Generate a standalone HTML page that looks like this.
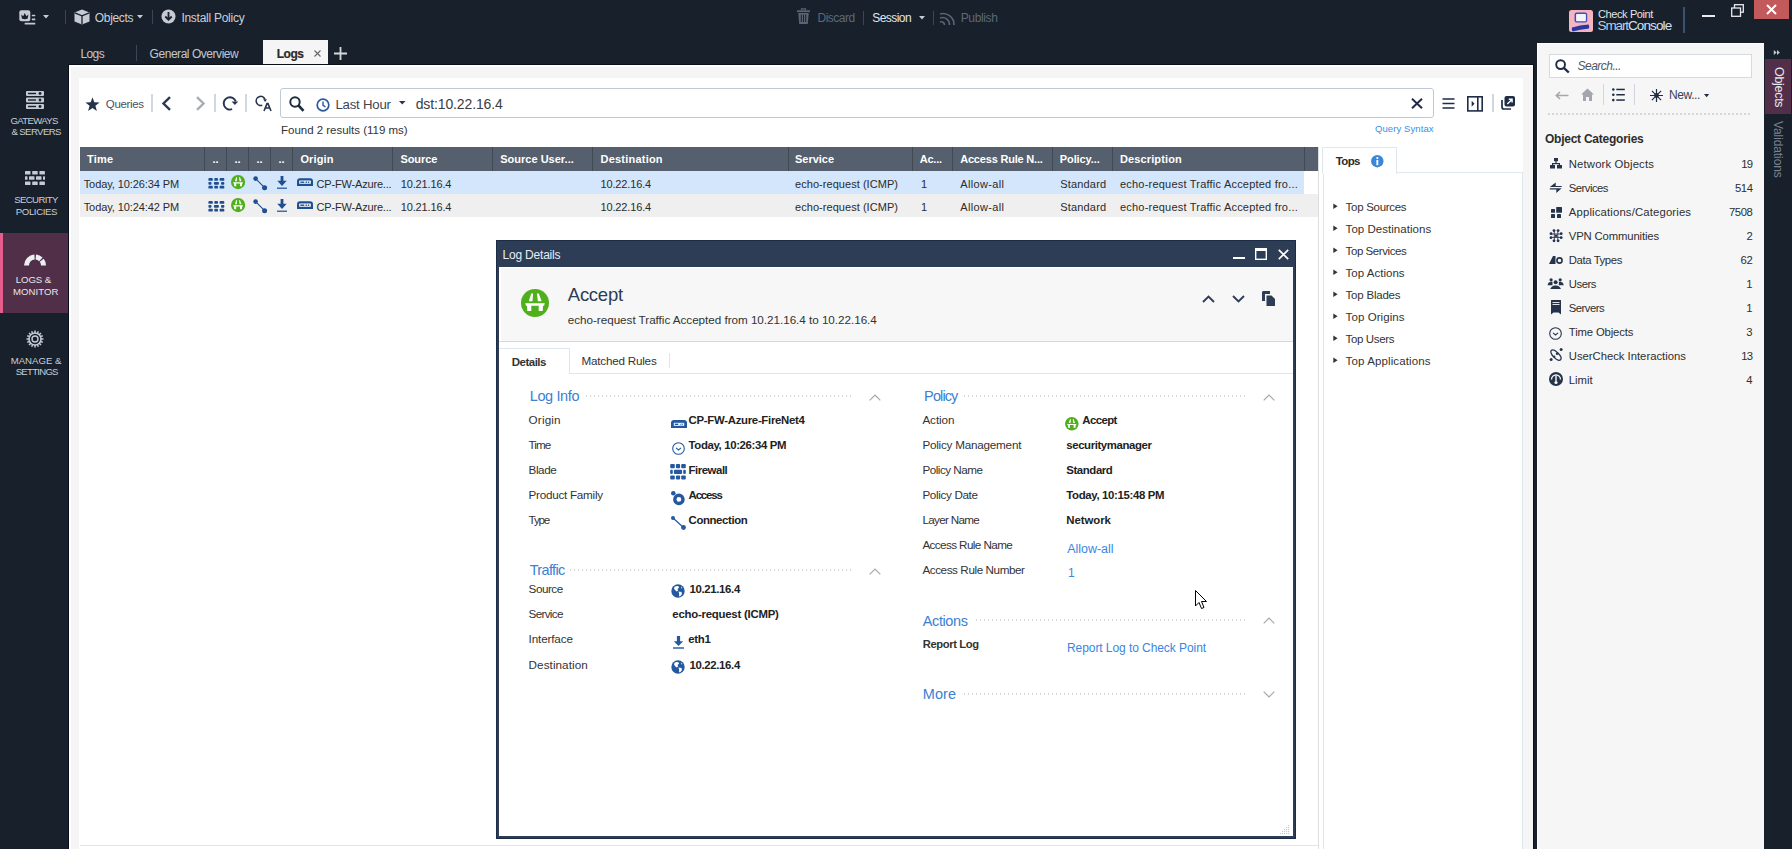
<!DOCTYPE html>
<html><head><meta charset="utf-8"><style>
*{box-sizing:border-box;margin:0;padding:0}
html,body{width:1792px;height:849px;overflow:hidden;background:#17202b;font-family:"Liberation Sans",sans-serif;color:#2b2b2b}
.a{position:absolute}
.t{position:absolute;white-space:nowrap;line-height:1}
svg{position:absolute;overflow:visible}
</style></head><body>
<svg style="left:19px;top:10px" width="18" height="15" viewBox="0 0 18 15">
 <rect x="0.3" y="0.3" width="11" height="10.9" rx="2" fill="#c5cad3"/>
 <path d="M2.2 4.4 L4.2 6.2 L5.8 3.1 L7.4 6.2 L9.4 4.4 L8.7 8.6 Q5.8 9.7 2.9 8.6Z" fill="#17202b"/>
 <rect x="12.8" y="4.7" width="3.5" height="1.6" rx="0.5" fill="#c5cad3"/><rect x="12.8" y="8.6" width="3.5" height="1.6" rx="0.5" fill="#c5cad3"/>
 <rect x="5.6" y="12.8" width="10.7" height="1.6" rx="0.5" fill="#c5cad3"/>
</svg>
<svg style="left:43px;top:14.5px" width="6" height="4"><path d="M0 0 L6 0 L3 3.5Z" fill="#c5cad3"/></svg>
<div class="a" style="left:65px;top:10px;width:1px;height:14px;background:#3c4655"></div>
<svg style="left:74px;top:9px" width="16" height="16" viewBox="0 0 16 16">
 <path d="M8 0.5 L15.5 3.5 L15.5 12.5 L8 15.5 L0.5 12.5 L0.5 3.5Z" fill="#c5cad3"/>
 <path d="M0.8 3.8 L8 6.8 L15.2 3.8 M8 6.8 L8 15.3" stroke="#17202b" stroke-width="1.3" fill="none"/>
</svg>
<svg style="left:137px;top:15px" width="6" height="4"><path d="M0 0 L6 0 L3 3.5Z" fill="#c5cad3"/></svg>
<div class="a" style="left:152px;top:10px;width:1px;height:14px;background:#3c4655"></div>
<svg style="left:161px;top:9px" width="15" height="15" viewBox="0 0 15 15">
 <circle cx="7.5" cy="7.5" r="7" fill="#c5cad3"/>
 <path d="M7.5 3 L7.5 10.5 M4.3 7.5 L7.5 10.8 L10.7 7.5" stroke="#17202b" stroke-width="1.8" fill="none"/>
</svg>
<div class="t" style="left:94.80px;top:12.00px;font-size:12px;color:#c9d0da;letter-spacing:-0.327px;">Objects</div>
<div class="t" style="left:181.40px;top:12.00px;font-size:12px;color:#c9d0da;letter-spacing:-0.265px;">Install Policy</div>
<svg style="left:797px;top:8px" width="13" height="17" viewBox="0 0 13 17">
 <path d="M4.5 2 L4.5 0.8 L8.5 0.8 L8.5 2" stroke="#5b6472" stroke-width="1.2" fill="none"/>
 <rect x="0" y="2.3" width="13" height="1.8" fill="#5b6472"/>
 <path d="M1.3 5 L2.2 16 L10.8 16 L11.7 5Z" fill="#5b6472"/>
 <path d="M4.3 6.5 L4.3 14 M6.5 6.5 L6.5 14 M8.7 6.5 L8.7 14" stroke="#17202b" stroke-width="1"/>
</svg>
<div class="a" style="left:863px;top:11px;width:1px;height:14px;background:#3c4655"></div>
<svg style="left:919px;top:16px" width="6" height="4"><path d="M0 0 L6 0 L3 3.5Z" fill="#c5cad3"/></svg>
<div class="a" style="left:933px;top:11px;width:1px;height:14px;background:#3c4655"></div>
<svg style="left:939px;top:9px" width="16" height="17" viewBox="0 0 16 17">
 <path d="M1 5 A11 11 0 0 1 15 16 M1 9 A7 7 0 0 1 10.5 16 M1 13 A3.2 3.2 0 0 1 5.5 16" stroke="#5b6472" stroke-width="1.6" fill="none"/>
</svg>
<div class="t" style="left:817.60px;top:12.00px;font-size:12px;color:#5e6876;letter-spacing:-0.527px;">Discard</div>
<div class="t" style="left:872.30px;top:12.00px;font-size:12px;color:#e3e7ec;letter-spacing:-0.572px;">Session</div>
<div class="t" style="left:960.70px;top:12.00px;font-size:12px;color:#5e6876;letter-spacing:-0.366px;">Publish</div>
<div class="a" style="left:1569px;top:9.5px;width:23.5px;height:22.5px;background:#f6b4c3;border-radius:2.5px"></div>
<svg style="left:1569px;top:9.5px" width="24" height="23" viewBox="0 0 24 23">
 <rect x="5.6" y="2.6" width="12.6" height="9.8" rx="2" fill="#3f4db5"/>
 <rect x="7.1" y="3.9" width="9.8" height="7.3" rx="0.6" fill="#f4f4fb"/>
 <path d="M3 17.6 Q11 15 19.6 14.6 Q20.6 16.5 20 18.6 Q11 19.5 3.6 21.6 Q2.2 19.5 3 17.6Z" fill="#2637a3"/>
</svg>
<div class="a" style="left:1683px;top:7px;width:2px;height:26px;background:#3b5170"></div>
<div class="a" style="left:1702px;top:15px;width:13px;height:2px;background:#e8eaee"></div>
<svg style="left:1731px;top:4px" width="13" height="13" viewBox="0 0 13 13">
 <rect x="3.5" y="0.7" width="8.8" height="7.5" fill="none" stroke="#e8eaee" stroke-width="1.3"/>
 <rect x="0.7" y="4" width="8.8" height="8.3" fill="#17202b" stroke="#e8eaee" stroke-width="1.3"/>
</svg>
<div class="a" style="left:1754px;top:0;width:35px;height:19px;background:#c2595b"></div>
<svg style="left:1766px;top:4px" width="11" height="11" viewBox="0 0 11 11"><path d="M1 1 L10 10 M10 1 L1 10" stroke="#fff" stroke-width="2"/></svg>
<div class="t" style="left:1598.00px;top:9.00px;font-size:11px;color:#e2e4e8;letter-spacing:-0.392px;">Check Point</div>
<div class="t" style="left:1597.5px;top:18.8px;font-size:13.5px;letter-spacing:-1.1px;color:#b9cde6">Smart<span style="color:#d4e3f5;letter-spacing:-0.9px">Console</span></div>
<div class="a" style="left:136px;top:45px;width:1px;height:16px;background:#3c4655"></div>
<div class="a" style="left:263px;top:40px;width:65px;height:27px;background:#f5f5f5"></div>
<svg style="left:314px;top:50px" width="7" height="7"><path d="M0.5 0.5 L6.5 6.5 M6.5 0.5 L0.5 6.5" stroke="#666" stroke-width="1.1"/></svg>
<svg style="left:334px;top:47px" width="13" height="13"><path d="M6.5 0 L6.5 13 M0 6.5 L13 6.5" stroke="#d5d9de" stroke-width="1.8"/></svg>
<div class="t" style="left:80.40px;top:48.00px;font-size:12px;color:#c3c8d0;letter-spacing:-0.558px;">Logs</div>
<div class="t" style="left:149.60px;top:48.00px;font-size:12px;color:#c3c8d0;letter-spacing:-0.459px;">General Overview</div>
<div class="t" style="left:276.80px;top:48.00px;font-size:12px;color:#2b2b2b;letter-spacing:-0.508px;font-weight:600;-webkit-text-stroke:0.2px #2b2b2b;">Logs</div>
<svg style="left:26px;top:91px" width="18" height="18" viewBox="0 0 18 18">
 <g fill="#c5cad3">
  <rect x="0" y="0" width="18" height="5" rx="1"/><rect x="0" y="6.5" width="18" height="5" rx="1"/><rect x="0" y="13" width="18" height="5" rx="1"/>
 </g>
 <g fill="#17202b">
  <rect x="2" y="1.8" width="8" height="1.4"/><rect x="2" y="8.3" width="8" height="1.4"/><rect x="2" y="14.8" width="8" height="1.4"/>
  <circle cx="14" cy="2.5" r="1.4"/><circle cx="14" cy="9" r="1.4"/><circle cx="14" cy="15.5" r="1.4"/>
 </g>
</svg>
<svg style="left:25px;top:171px" width="20" height="14" viewBox="0 0 20 14">
 <g fill="#c5cad3">
  <rect x="0" y="0" width="5.5" height="3.6" rx="0.6"/><rect x="7.2" y="0" width="5.5" height="3.6" rx="0.6"/><rect x="14.4" y="0" width="5.5" height="3.6" rx="0.6"/>
  <rect x="0" y="5.2" width="2.5" height="3.6" rx="0.6"/><rect x="4" y="5.2" width="5.5" height="3.6" rx="0.6"/><rect x="11" y="5.2" width="5.5" height="3.6" rx="0.6"/><rect x="18" y="5.2" width="2" height="3.6" rx="0.6"/>
  <rect x="0" y="10.4" width="5.5" height="3.6" rx="0.6"/><rect x="7.2" y="10.4" width="5.5" height="3.6" rx="0.6"/><rect x="14.4" y="10.4" width="5.5" height="3.6" rx="0.6"/>
 </g>
</svg>
<div class="a" style="left:0;top:233px;width:69px;height:80px;background:#522f48"></div>
<div class="a" style="left:0;top:233px;width:3px;height:80px;background:#e55d8c"></div>
<svg style="left:24px;top:253px" width="22" height="13" viewBox="0 0 22 13">
 <path d="M2.5 12.5 A8.5 8.5 0 0 1 19.5 12.5" stroke="#eceef2" stroke-width="5" fill="none" stroke-dasharray="12.8 1.3 5.6 1.3 100"/>
</svg>
<svg style="left:26px;top:330px" width="18" height="18" viewBox="0 0 18 18">
 <g stroke="#c5cad3" fill="none">
  <circle cx="9" cy="9" r="6" stroke-width="1.6"/><circle cx="9" cy="9" r="3" stroke-width="1.4"/>
  <path d="M9 0.5 L9 3 M9 15 L9 17.5 M0.5 9 L3 9 M15 9 L17.5 9 M3 3 L4.8 4.8 M13.2 13.2 L15 15 M3 15 L4.8 13.2 M13.2 4.8 L15 3 M5.7 1.2 L6.4 3.1 M11.6 14.9 L12.3 16.8 M1.2 12.3 L3.1 11.6 M14.9 6.4 L16.8 5.7 M12.3 1.2 L11.6 3.1 M6.4 14.9 L5.7 16.8 M1.2 5.7 L3.1 6.4 M14.9 11.6 L16.8 12.3" stroke-width="1.5"/>
 </g>
</svg>
<div class="t" style="left:10.60px;top:116.00px;font-size:9.6px;color:#c9ced6;letter-spacing:-0.687px;">GATEWAYS</div>
<div class="t" style="left:11.40px;top:127.00px;font-size:9.6px;color:#c9ced6;letter-spacing:-0.583px;">&amp; SERVERS</div>
<div class="t" style="left:14.30px;top:195.00px;font-size:9.6px;color:#c9ced6;letter-spacing:-0.639px;">SECURITY</div>
<div class="t" style="left:15.80px;top:207.00px;font-size:9.6px;color:#c9ced6;letter-spacing:-0.383px;">POLICIES</div>
<div class="t" style="left:15.70px;top:275.00px;font-size:9.6px;color:#e6e8ec;letter-spacing:-0.039px;">LOGS &amp;</div>
<div class="t" style="left:12.90px;top:287.00px;font-size:9.6px;color:#e6e8ec;letter-spacing:0.080px;">MONITOR</div>
<div class="t" style="left:10.70px;top:356.00px;font-size:9.6px;color:#c9ced6;letter-spacing:0.005px;">MANAGE &amp;</div>
<div class="t" style="left:15.70px;top:367.00px;font-size:9.6px;color:#c9ced6;letter-spacing:-0.736px;">SETTINGS</div>
<div class="a" style="left:68px;top:64px;width:1466px;height:785px;background:#0a111c"></div>
<div class="a" style="left:69px;top:65px;width:1464px;height:784px;background:#f5f5f5;border-left:2px solid #fff;border-top:2px solid #fff"></div>
<div class="a" style="left:79px;top:78px;width:1444px;height:771px;background:#fff"></div>
<svg style="left:85px;top:96.5px" width="15" height="15" viewBox="0 0 15 15"><path d="M7.5 0.3 L9.3 5.2 L14.6 5.4 L10.4 8.7 L11.9 13.9 L7.5 10.9 L3.1 13.9 L4.6 8.7 L0.4 5.4 L5.7 5.2Z" fill="#26344b"/></svg>
<div class="a" style="left:151.25px;top:94px;width:1.5px;height:18px;background:#d0d7e0"></div>
<svg style="left:161px;top:96px" width="11" height="15" viewBox="0 0 11 15"><path d="M9 1.2 L2.5 7.5 L9 13.8" stroke="#2a3950" stroke-width="2.4" fill="none"/></svg>
<svg style="left:195px;top:96px" width="11" height="15" viewBox="0 0 11 15"><path d="M2 1.2 L8.5 7.5 L2 13.8" stroke="#a9adb3" stroke-width="2.4" fill="none"/></svg>
<div class="a" style="left:214.25px;top:94px;width:1.5px;height:18px;background:#d0d7e0"></div>
<svg style="left:222px;top:96px" width="17" height="16" viewBox="0 0 17 16"><path d="M10.1 13.2 A6.2 6.2 0 1 1 13.76 5.38" stroke="#26344b" stroke-width="1.9" fill="none"/><path d="M9.6 5.4 L16.2 5.4 L12.9 9.1Z" fill="#26344b"/></svg>
<div class="a" style="left:245.25px;top:94px;width:1.5px;height:18px;background:#d0d7e0"></div>
<svg style="left:255px;top:95px" width="17" height="17" viewBox="0 0 17 17"><path d="M7.24 10.13 A4.5 4.5 0 1 1 9.93 4.36" stroke="#26344b" stroke-width="1.6" fill="none"/><path d="M8.2 4.3 L12 4.3 L10.1 7.1Z" fill="#26344b"/><path d="M9 16 L12 8.6 L13 8.6 L16 16 M10.3 13 L14.7 13" stroke="#26344b" stroke-width="1.6" fill="none"/></svg>
<div class="a" style="left:280px;top:88px;width:1154px;height:30px;border:1.5px solid #bfc9d5;border-radius:3px;background:#fff"></div>
<svg style="left:289px;top:95.5px" width="16" height="16" viewBox="0 0 16 16"><circle cx="6" cy="6" r="4.7" stroke="#1e2d44" stroke-width="2" fill="none"/><path d="M9.5 9.5 L14.5 14.8" stroke="#1e2d44" stroke-width="2.6"/></svg>
<svg style="left:316px;top:97.5px" width="14" height="14" viewBox="0 0 14 14"><circle cx="7" cy="7" r="5.8" stroke="#2b5a9b" stroke-width="1.7" fill="none"/><path d="M7 3.5 L7 7.3 L9.5 8.8" stroke="#2b5a9b" stroke-width="1.4" fill="none"/></svg>
<svg style="left:399px;top:101px" width="7" height="4"><path d="M0 0 L6.5 0 L3.25 3.5Z" fill="#26344b"/></svg>
<svg style="left:1411px;top:98px" width="12" height="11" viewBox="0 0 12 11"><path d="M1 0.8 L11 10.2 M11 0.8 L1 10.2" stroke="#1e2d44" stroke-width="2"/></svg>
<svg style="left:1442px;top:98px" width="13" height="11" viewBox="0 0 13 11"><path d="M0.5 1 L12.5 1 M0.5 5.5 L12.5 5.5 M0.5 10 L12.5 10" stroke="#1e2d44" stroke-width="1.6"/></svg>
<svg style="left:1467px;top:96px" width="16" height="16" viewBox="0 0 16 16"><rect x="0.8" y="0.8" width="14.4" height="14.1" stroke="#1e2d44" stroke-width="1.6" fill="none"/><path d="M10.8 1 L10.8 15" stroke="#1e2d44" stroke-width="1.6"/><path d="M4.7 4.8 L7.5 7.8 L4.7 10.8Z" fill="#1e2d44"/></svg>
<div class="a" style="left:1492.25px;top:94px;width:1.5px;height:18px;background:#d0d7e0"></div>
<svg style="left:1501px;top:96px" width="14" height="14" viewBox="0 0 14 14"><rect x="3.5" y="0" width="10.5" height="10.5" rx="2" fill="#1e2d44"/><path d="M1 4 L1 11 Q1 13 3 13 L10 13" stroke="#1e2d44" stroke-width="1.7" fill="none"/><path d="M6.3 8 L11 3.4 M7.8 3.3 L11.1 3.3 L11.1 6.5" stroke="#fff" stroke-width="1.4" fill="none"/></svg>
<div class="t" style="left:105.80px;top:99.00px;font-size:11.5px;color:#4a5262;letter-spacing:-0.326px;">Queries</div>
<div class="t" style="left:335.40px;top:98.00px;font-size:13.2px;color:#3d4451;letter-spacing:-0.199px;">Last Hour</div>
<div class="t" style="left:415.70px;top:97.00px;font-size:14px;color:#383d46;letter-spacing:-0.125px;">dst:10.22.16.4</div>
<div class="t" style="left:1375.00px;top:124.00px;font-size:9.5px;color:#3a8ef0;letter-spacing:0.095px;">Query Syntax</div>
<div class="t" style="left:281.00px;top:125.00px;font-size:11.5px;color:#333;letter-spacing:-0.016px;">Found 2 results (119 ms)</div>
<div class="a" style="left:80px;top:147px;width:1238px;height:24px;background:#555f6d"></div>
<div class="a" style="left:204px;top:147px;width:1px;height:24px;background:#414955"></div>
<div class="a" style="left:226px;top:147px;width:1px;height:24px;background:#414955"></div>
<div class="a" style="left:248px;top:147px;width:1px;height:24px;background:#414955"></div>
<div class="a" style="left:270px;top:147px;width:1px;height:24px;background:#414955"></div>
<div class="a" style="left:292px;top:147px;width:1px;height:24px;background:#414955"></div>
<div class="a" style="left:392px;top:147px;width:1px;height:24px;background:#414955"></div>
<div class="a" style="left:492px;top:147px;width:1px;height:24px;background:#414955"></div>
<div class="a" style="left:592px;top:147px;width:1px;height:24px;background:#414955"></div>
<div class="a" style="left:788px;top:147px;width:1px;height:24px;background:#414955"></div>
<div class="a" style="left:912px;top:147px;width:1px;height:24px;background:#414955"></div>
<div class="a" style="left:952px;top:147px;width:1px;height:24px;background:#414955"></div>
<div class="a" style="left:1052px;top:147px;width:1px;height:24px;background:#414955"></div>
<div class="a" style="left:1112px;top:147px;width:1px;height:24px;background:#414955"></div>
<div class="a" style="left:1304px;top:147px;width:1px;height:24px;background:#414955"></div>
<div class="t" style="left:86.90px;top:154.00px;font-size:11px;color:#fff;font-weight:700;letter-spacing:0.229px;">Time</div>
<div class="t" style="left:212.50px;top:154.00px;font-size:11px;color:#fff;font-weight:700;">..</div>
<div class="t" style="left:234.50px;top:154.00px;font-size:11px;color:#fff;font-weight:700;">..</div>
<div class="t" style="left:256.50px;top:154.00px;font-size:11px;color:#fff;font-weight:700;">..</div>
<div class="t" style="left:278.50px;top:154.00px;font-size:11px;color:#fff;font-weight:700;">..</div>
<div class="t" style="left:300.40px;top:154.00px;font-size:11px;color:#fff;font-weight:700;letter-spacing:0.118px;">Origin</div>
<div class="t" style="left:400.50px;top:154.00px;font-size:11px;color:#fff;font-weight:700;letter-spacing:-0.099px;">Source</div>
<div class="t" style="left:500.20px;top:154.00px;font-size:11px;color:#fff;font-weight:700;letter-spacing:0.016px;">Source User...</div>
<div class="t" style="left:600.50px;top:154.00px;font-size:11px;color:#fff;font-weight:700;letter-spacing:0.218px;">Destination</div>
<div class="t" style="left:795.00px;top:154.00px;font-size:11px;color:#fff;font-weight:700;letter-spacing:-0.022px;">Service</div>
<div class="t" style="left:919.80px;top:154.00px;font-size:11px;color:#fff;font-weight:700;letter-spacing:-0.247px;">Ac...</div>
<div class="t" style="left:960.20px;top:154.00px;font-size:11px;color:#fff;font-weight:700;letter-spacing:-0.193px;">Access Rule N...</div>
<div class="t" style="left:1059.80px;top:154.00px;font-size:11px;color:#fff;font-weight:700;letter-spacing:-0.096px;">Policy...</div>
<div class="t" style="left:1120.00px;top:154.00px;font-size:11px;color:#fff;font-weight:700;letter-spacing:0.117px;">Description</div>
<div class="a" style="left:80px;top:171px;width:1224px;height:23px;background:#d3e6fb"></div>
<div class="a" style="left:80px;top:194px;width:1238px;height:23px;background:#efefef"></div>
<div class="t" style="left:83.70px;top:179.00px;font-size:11px;color:#2b2b2b;letter-spacing:-0.085px;">Today, 10:26:34 PM</div>
<div class="t" style="left:316.50px;top:179.00px;font-size:11px;color:#2b2b2b;letter-spacing:-0.173px;">CP-FW-Azure...</div>
<div class="t" style="left:400.70px;top:179.00px;font-size:11px;color:#2b2b2b;letter-spacing:-0.140px;">10.21.16.4</div>
<div class="t" style="left:600.50px;top:179.00px;font-size:11px;color:#2b2b2b;letter-spacing:-0.140px;">10.22.16.4</div>
<div class="t" style="left:795.00px;top:179.00px;font-size:11px;color:#2b2b2b;letter-spacing:0.048px;">echo-request (ICMP)</div>
<div class="t" style="left:920.90px;top:179.00px;font-size:11px;color:#2b2b2b;">1</div>
<div class="t" style="left:960.20px;top:179.00px;font-size:11px;color:#2b2b2b;letter-spacing:0.359px;">Allow-all</div>
<div class="t" style="left:1060.20px;top:179.00px;font-size:11px;color:#2b2b2b;letter-spacing:0.180px;">Standard</div>
<div class="t" style="left:1120.00px;top:179.00px;font-size:11px;color:#2b2b2b;letter-spacing:0.211px;">echo-request Traffic Accepted fro...</div>
<svg style="left:208px;top:178.1px" width="17" height="11" viewBox="0 0 17 11"><g fill="#1f4f91"><rect x="0.4" y="0" width="4.4" height="2.8" rx="0.9"/><rect x="6.3" y="0" width="3.7" height="2.8" rx="0.9"/><rect x="11.6" y="0" width="4.7" height="2.8" rx="0.9"/><rect x="0.4" y="3.9" width="3.1" height="2.8" rx="0.9"/><rect x="5.9" y="3.9" width="5" height="2.8" rx="0.9"/><rect x="13" y="3.9" width="3.3" height="2.8" rx="0.9"/><rect x="0.4" y="7.8" width="4.4" height="2.8" rx="0.9"/><rect x="6.3" y="7.8" width="3.7" height="2.8" rx="0.9"/><rect x="11.6" y="7.8" width="4.7" height="2.8" rx="0.9"/></g></svg>
<svg style="left:231.2px;top:175.0px" width="14.2" height="14.2" viewBox="0 0 28 28"><circle cx="14" cy="14" r="14" fill="#4fb01c"/><path d="M10.2 4.4 L12.1 4.4 L11.5 12.2 L7.8 12.2Z M15.9 4.4 L17.8 4.4 L20.6 12.2 L16.9 12.2Z M4.2 14.3 L23.8 14.3 L23 16.7 L5 16.7Z M6 16.5 L10.3 16.5 L10.3 22 L6.3 22Z M17.7 16.5 L22 16.5 L21.7 22 L17.7 22Z" fill="#fff"/></svg>
<svg style="left:253px;top:175.5px" width="16" height="15" viewBox="0 0 16 15"><path d="M2.6 2.6 L11.6 11.7" stroke="#1f4f91" stroke-width="1.2"/><circle cx="2.6" cy="2.6" r="2.3" fill="#1f4f91"/><circle cx="11.6" cy="11.7" r="2.5" fill="#1f4f91"/></svg>
<svg style="left:277.4px;top:175.5px" width="10" height="13" viewBox="0 0 10 13"><rect x="3.6" y="0" width="2.8" height="5.5" fill="#1f4f91"/><path d="M0.3 4.8 L9.7 4.8 L5 10Z" fill="#1f4f91"/><rect x="0" y="11.6" width="10" height="1.2" fill="#1f4f91"/></svg>
<svg style="left:297px;top:178.0px" width="16" height="8" viewBox="0 0 16 8"><path d="M0 8 L0 3.5 Q0 0.3 3 0.3 L13 0.3 Q16 0.3 16 3.5 L16 8Z" fill="#1f4f91"/><rect x="2.2" y="2.6" width="11.6" height="3.2" rx="0.5" fill="#fff"/><rect x="3.3" y="3.5" width="4" height="1.4" fill="#1f4f91"/><rect x="8.5" y="3.5" width="1.5" height="1.4" fill="#1f4f91"/><rect x="10.8" y="3.5" width="1.5" height="1.4" fill="#1f4f91"/></svg>
<div class="t" style="left:83.70px;top:202.00px;font-size:11px;color:#2b2b2b;letter-spacing:-0.085px;">Today, 10:24:42 PM</div>
<div class="t" style="left:316.50px;top:202.00px;font-size:11px;color:#2b2b2b;letter-spacing:-0.173px;">CP-FW-Azure...</div>
<div class="t" style="left:400.70px;top:202.00px;font-size:11px;color:#2b2b2b;letter-spacing:-0.140px;">10.21.16.4</div>
<div class="t" style="left:600.50px;top:202.00px;font-size:11px;color:#2b2b2b;letter-spacing:-0.140px;">10.22.16.4</div>
<div class="t" style="left:795.00px;top:202.00px;font-size:11px;color:#2b2b2b;letter-spacing:0.048px;">echo-request (ICMP)</div>
<div class="t" style="left:920.90px;top:202.00px;font-size:11px;color:#2b2b2b;">1</div>
<div class="t" style="left:960.20px;top:202.00px;font-size:11px;color:#2b2b2b;letter-spacing:0.359px;">Allow-all</div>
<div class="t" style="left:1060.20px;top:202.00px;font-size:11px;color:#2b2b2b;letter-spacing:0.180px;">Standard</div>
<div class="t" style="left:1120.00px;top:202.00px;font-size:11px;color:#2b2b2b;letter-spacing:0.211px;">echo-request Traffic Accepted fro...</div>
<svg style="left:208px;top:201.1px" width="17" height="11" viewBox="0 0 17 11"><g fill="#1f4f91"><rect x="0.4" y="0" width="4.4" height="2.8" rx="0.9"/><rect x="6.3" y="0" width="3.7" height="2.8" rx="0.9"/><rect x="11.6" y="0" width="4.7" height="2.8" rx="0.9"/><rect x="0.4" y="3.9" width="3.1" height="2.8" rx="0.9"/><rect x="5.9" y="3.9" width="5" height="2.8" rx="0.9"/><rect x="13" y="3.9" width="3.3" height="2.8" rx="0.9"/><rect x="0.4" y="7.8" width="4.4" height="2.8" rx="0.9"/><rect x="6.3" y="7.8" width="3.7" height="2.8" rx="0.9"/><rect x="11.6" y="7.8" width="4.7" height="2.8" rx="0.9"/></g></svg>
<svg style="left:231.2px;top:198.0px" width="14.2" height="14.2" viewBox="0 0 28 28"><circle cx="14" cy="14" r="14" fill="#4fb01c"/><path d="M10.2 4.4 L12.1 4.4 L11.5 12.2 L7.8 12.2Z M15.9 4.4 L17.8 4.4 L20.6 12.2 L16.9 12.2Z M4.2 14.3 L23.8 14.3 L23 16.7 L5 16.7Z M6 16.5 L10.3 16.5 L10.3 22 L6.3 22Z M17.7 16.5 L22 16.5 L21.7 22 L17.7 22Z" fill="#fff"/></svg>
<svg style="left:253px;top:198.5px" width="16" height="15" viewBox="0 0 16 15"><path d="M2.6 2.6 L11.6 11.7" stroke="#1f4f91" stroke-width="1.2"/><circle cx="2.6" cy="2.6" r="2.3" fill="#1f4f91"/><circle cx="11.6" cy="11.7" r="2.5" fill="#1f4f91"/></svg>
<svg style="left:277.4px;top:198.5px" width="10" height="13" viewBox="0 0 10 13"><rect x="3.6" y="0" width="2.8" height="5.5" fill="#1f4f91"/><path d="M0.3 4.8 L9.7 4.8 L5 10Z" fill="#1f4f91"/><rect x="0" y="11.6" width="10" height="1.2" fill="#1f4f91"/></svg>
<svg style="left:297px;top:201.0px" width="16" height="8" viewBox="0 0 16 8"><path d="M0 8 L0 3.5 Q0 0.3 3 0.3 L13 0.3 Q16 0.3 16 3.5 L16 8Z" fill="#1f4f91"/><rect x="2.2" y="2.6" width="11.6" height="3.2" rx="0.5" fill="#fff"/><rect x="3.3" y="3.5" width="4" height="1.4" fill="#1f4f91"/><rect x="8.5" y="3.5" width="1.5" height="1.4" fill="#1f4f91"/><rect x="10.8" y="3.5" width="1.5" height="1.4" fill="#1f4f91"/></svg>
<div class="a" style="left:1318px;top:147px;width:1px;height:702px;background:#dedede"></div>
<div class="a" style="left:1323px;top:172px;width:200px;height:677px;border:1px solid #dfe6ee;border-bottom:0"></div>
<div class="a" style="left:1322px;top:147px;width:75px;height:26.5px;border:1px solid #dfe6ee;border-bottom:0;background:#fff"></div>
<svg style="left:1370.5px;top:155px" width="13" height="13" viewBox="0 0 13 13"><circle cx="6.3" cy="6.2" r="6.2" fill="#3a87d8"/><rect x="5.4" y="5" width="1.9" height="5.2" fill="#fff"/><circle cx="6.35" cy="3.1" r="1.1" fill="#fff"/></svg>
<div class="t" style="left:1335.80px;top:156.00px;font-size:11.5px;color:#2b2b2b;font-weight:700;letter-spacing:-0.656px;">Tops</div>
<svg style="left:1333.3px;top:203.2px" width="6" height="7"><path d="M0.3 0.5 L4.6 3.3 L0.3 6.1Z" fill="#333"/></svg>
<div class="t" style="left:1345.60px;top:202.00px;font-size:11.5px;color:#333;letter-spacing:-0.294px;">Top Sources</div>
<svg style="left:1333.3px;top:225.2px" width="6" height="7"><path d="M0.3 0.5 L4.6 3.3 L0.3 6.1Z" fill="#333"/></svg>
<div class="t" style="left:1345.60px;top:224.00px;font-size:11.5px;color:#333;letter-spacing:0.036px;">Top Destinations</div>
<svg style="left:1333.3px;top:247.2px" width="6" height="7"><path d="M0.3 0.5 L4.6 3.3 L0.3 6.1Z" fill="#333"/></svg>
<div class="t" style="left:1345.60px;top:246.00px;font-size:11.5px;color:#333;letter-spacing:-0.429px;">Top Services</div>
<svg style="left:1333.3px;top:269.2px" width="6" height="7"><path d="M0.3 0.5 L4.6 3.3 L0.3 6.1Z" fill="#333"/></svg>
<div class="t" style="left:1345.60px;top:268.00px;font-size:11.5px;color:#333;letter-spacing:0.016px;">Top Actions</div>
<svg style="left:1333.3px;top:291.2px" width="6" height="7"><path d="M0.3 0.5 L4.6 3.3 L0.3 6.1Z" fill="#333"/></svg>
<div class="t" style="left:1345.60px;top:290.00px;font-size:11.5px;color:#333;letter-spacing:-0.221px;">Top Blades</div>
<svg style="left:1333.3px;top:313.2px" width="6" height="7"><path d="M0.3 0.5 L4.6 3.3 L0.3 6.1Z" fill="#333"/></svg>
<div class="t" style="left:1345.60px;top:312.00px;font-size:11.5px;color:#333;letter-spacing:0.075px;">Top Origins</div>
<svg style="left:1333.3px;top:335.2px" width="6" height="7"><path d="M0.3 0.5 L4.6 3.3 L0.3 6.1Z" fill="#333"/></svg>
<div class="t" style="left:1345.60px;top:334.00px;font-size:11.5px;color:#333;letter-spacing:-0.365px;">Top Users</div>
<svg style="left:1333.3px;top:357.2px" width="6" height="7"><path d="M0.3 0.5 L4.6 3.3 L0.3 6.1Z" fill="#333"/></svg>
<div class="t" style="left:1345.60px;top:356.00px;font-size:11.5px;color:#333;letter-spacing:0.117px;">Top Applications</div>
<div class="a" style="left:1537px;top:43px;width:227px;height:806px;background:#f6f6f6;border-left:1px solid #fff;border-top:1px solid #fff"></div>
<div class="a" style="left:1548.5px;top:53.5px;width:203px;height:24px;border:1px solid #d6dbe1;background:#fff"></div>
<svg style="left:1555px;top:58.5px" width="16" height="14" viewBox="0 0 16 14"><circle cx="5.6" cy="5.6" r="4.4" stroke="#1e2d44" stroke-width="1.9" fill="none"/><path d="M8.8 8.8 L13.8 13.5" stroke="#1e2d44" stroke-width="2.4"/></svg>
<svg style="left:1555px;top:90.5px" width="14" height="9" viewBox="0 0 14 9"><path d="M13.5 4.5 L1.5 4.5 M5 1 L1.3 4.5 L5 8" stroke="#a3a7ad" stroke-width="1.6" fill="none"/></svg>
<svg style="left:1581px;top:88px" width="13" height="13" viewBox="0 0 13 13"><path d="M6.5 0.5 L0 6.5 L2 6.5 L2 13 L5 13 L5 9 L8 9 L8 13 L11 13 L11 6.5 L13 6.5Z" fill="#a3a7ad"/></svg>
<div class="a" style="left:1603px;top:83.5px;width:1px;height:21px;background:#d2d6dc"></div>
<svg style="left:1612px;top:87.5px" width="13" height="14" viewBox="0 0 13 14"><g fill="#1e2d44"><circle cx="1.3" cy="1.5" r="1.3"/><circle cx="1.3" cy="6.8" r="1.3"/><circle cx="1.3" cy="12.1" r="1.3"/><rect x="4.3" y="0.7" width="8.5" height="1.5"/><rect x="4.3" y="6" width="8.5" height="1.5"/><rect x="4.3" y="11.3" width="8.5" height="1.5"/></g></svg>
<div class="a" style="left:1634px;top:83.5px;width:1px;height:21px;background:#d2d6dc"></div>
<svg style="left:1649.5px;top:88.5px" width="13" height="13" viewBox="0 0 13 13"><path d="M6.5 0 L6.5 13 M0 6.5 L13 6.5 M1.9 1.9 L11.1 11.1 M11.1 1.9 L1.9 11.1" stroke="#1e2d44" stroke-width="1.2"/><circle cx="6.5" cy="6.5" r="2.4" fill="#1e2d44"/></svg>
<svg style="left:1704.4px;top:93.5px" width="6" height="4"><path d="M0 0 L5.2 0 L2.6 3.2Z" fill="#1e2d44"/></svg>
<div class="a" style="left:1548px;top:113px;width:204px;height:2px;background:repeating-linear-gradient(to right,#d3d7dd 0 2px,transparent 2px 4px)"></div>
<div class="t" style="left:1577.50px;top:60.00px;font-size:12px;color:#50565f;font-style:italic;letter-spacing:-0.515px;">Search...</div>
<div class="t" style="left:1669.00px;top:89.00px;font-size:12px;color:#3c4250;letter-spacing:-0.393px;">New...</div>
<div class="t" style="left:1545.00px;top:133.00px;font-size:12px;color:#2d2d2d;font-weight:700;letter-spacing:-0.247px;">Object Categories</div>
<div class="t" style="left:1568.80px;top:159.00px;font-size:11.3px;color:#2e2e2e;letter-spacing:0.155px;">Network Objects</div>
<div class="t" style="left:1741.20px;top:159.00px;font-size:11.3px;color:#2e2e2e;letter-spacing:-0.639px;">19</div>
<div class="t" style="left:1568.80px;top:183.00px;font-size:11.3px;color:#2e2e2e;letter-spacing:-0.516px;">Services</div>
<div class="t" style="left:1735.00px;top:183.00px;font-size:11.3px;color:#2e2e2e;letter-spacing:-0.453px;">514</div>
<div class="t" style="left:1568.80px;top:207.00px;font-size:11.3px;color:#2e2e2e;letter-spacing:0.161px;">Applications/Categories</div>
<div class="t" style="left:1728.90px;top:207.00px;font-size:11.3px;color:#2e2e2e;letter-spacing:-0.385px;">7508</div>
<div class="t" style="left:1568.80px;top:231.00px;font-size:11.3px;color:#2e2e2e;letter-spacing:-0.140px;">VPN Communities</div>
<div class="t" style="left:1746.60px;top:231.00px;font-size:11.3px;color:#2e2e2e;">2</div>
<div class="t" style="left:1568.80px;top:255.00px;font-size:11.3px;color:#2e2e2e;letter-spacing:-0.384px;">Data Types</div>
<div class="t" style="left:1740.60px;top:255.00px;font-size:11.3px;color:#2e2e2e;letter-spacing:-0.339px;">62</div>
<div class="t" style="left:1568.80px;top:279.00px;font-size:11.3px;color:#2e2e2e;letter-spacing:-0.460px;">Users</div>
<div class="t" style="left:1746.20px;top:279.00px;font-size:11.3px;color:#2e2e2e;">1</div>
<div class="t" style="left:1568.80px;top:303.00px;font-size:11.3px;color:#2e2e2e;letter-spacing:-0.517px;">Servers</div>
<div class="t" style="left:1746.20px;top:303.00px;font-size:11.3px;color:#2e2e2e;">1</div>
<div class="t" style="left:1568.80px;top:327.00px;font-size:11.3px;color:#2e2e2e;letter-spacing:-0.144px;">Time Objects</div>
<div class="t" style="left:1746.20px;top:327.00px;font-size:11.3px;color:#2e2e2e;">3</div>
<div class="t" style="left:1568.80px;top:351.00px;font-size:11.3px;color:#2e2e2e;letter-spacing:-0.019px;">UserCheck Interactions</div>
<div class="t" style="left:1741.20px;top:351.00px;font-size:11.3px;color:#2e2e2e;letter-spacing:-0.639px;">13</div>
<div class="t" style="left:1568.80px;top:375.00px;font-size:11.3px;color:#2e2e2e;letter-spacing:-0.032px;">Limit</div>
<div class="t" style="left:1746.20px;top:375.00px;font-size:11.3px;color:#2e2e2e;">4</div>
<svg style="left:1550px;top:158px" width="12" height="11" viewBox="0 0 12 11"><g fill="#26344b"><rect x="4" y="0" width="4" height="3.2"/><rect x="5.4" y="3" width="1.2" height="2.5"/><rect x="2" y="5" width="8" height="1.2"/><rect x="2" y="5" width="1.2" height="2"/><rect x="8.8" y="5" width="1.2" height="2"/><rect x="0" y="7" width="5" height="3.5"/><rect x="7" y="7" width="5" height="3.5"/></g></svg>
<svg style="left:1549px;top:182px" width="14" height="12" viewBox="0 0 14 12"><path d="M0.8 5 L6.7 0.5 L6.7 4 L12.7 4 L12.7 5Z M0.8 6.2 L12.7 6.2 L7.3 11 L7.3 7.4 L0.8 7.4Z" fill="#26344b"/></svg>
<svg style="left:1550.5px;top:206.5px" width="11" height="11" viewBox="0 0 11 11"><g fill="#26344b"><rect x="0" y="2" width="4" height="3.8" rx="0.6"/><rect x="5.2" y="0" width="5.8" height="5.8" rx="0.6"/><rect x="0" y="7" width="4" height="4" rx="0.6"/><rect x="6" y="7" width="4" height="4" rx="0.6"/></g></svg>
<svg style="left:1549px;top:229px" width="14" height="14" viewBox="0 0 14 14"><g stroke="#26344b" stroke-width="0.9"><path d="M5.3 1.6 L5.3 11.8 M8.8 1.6 L8.8 11.8 M2 5 L12.2 5 M2 8.4 L12.2 8.4"/></g><g fill="#26344b"><circle cx="5" cy="1.6" r="1.4"/><circle cx="9.1" cy="1.6" r="1.4"/><circle cx="2" cy="4.7" r="1.4"/><circle cx="12.2" cy="4.7" r="1.4"/><circle cx="2" cy="8.7" r="1.4"/><circle cx="12.2" cy="8.7" r="1.4"/><circle cx="5" cy="11.8" r="1.4"/><circle cx="9.1" cy="11.8" r="1.4"/><rect x="6" y="5.7" width="2.2" height="2.2"/></g></svg>
<svg style="left:1549px;top:256px" width="14" height="8" viewBox="0 0 14 8"><path d="M0 8 L4 0 L6.5 0 L6.5 8Z" fill="#26344b"/><circle cx="10.5" cy="4.5" r="2.6" fill="none" stroke="#26344b" stroke-width="1.6"/></svg>
<svg style="left:1547px;top:278px" width="17" height="12" viewBox="0 0 17 12"><g fill="#26344b"><circle cx="4.1" cy="1.8" r="1.6"/><circle cx="13.2" cy="1.8" r="1.6"/><path d="M0.5 7.2 Q1 4.3 3.5 3.8 L5.5 3.8 L5.5 7.2Z"/><path d="M11.8 3.8 L13.8 3.8 Q16.3 4.3 16.8 7.2 L11.8 7.2Z"/><circle cx="8.6" cy="4.2" r="2"/><path d="M3.3 11 Q3.8 8.4 7.5 7.4 L9.7 7.4 Q13.4 8.4 13.9 11Z"/></g></svg>
<svg style="left:1550.5px;top:300px" width="10" height="15" viewBox="0 0 10 15"><path d="M0 0.5 Q0 0 0.5 0 L9.5 0 Q10 0 10 0.5 L10 14.5 L7.5 12.5 L2.5 12.5 L0 14.5Z" fill="#26344b"/><rect x="1.5" y="2" width="7" height="0.9" fill="#f5f5f5"/><rect x="1.5" y="4" width="7" height="0.9" fill="#f5f5f5"/></svg>
<svg style="left:1549px;top:326.5px" width="13" height="13" viewBox="0 0 13 13"><circle cx="6.5" cy="6.5" r="5.8" fill="none" stroke="#26344b" stroke-width="1.1"/><path d="M4 5.8 L6.5 8 L9 5.8" fill="none" stroke="#26344b" stroke-width="1.1"/></svg>
<svg style="left:1549px;top:348px" width="14" height="14" viewBox="0 0 14 14"><ellipse cx="6.9" cy="7.1" rx="6.6" ry="2.9" transform="rotate(45 6.9 7.1)" fill="none" stroke="#26344b" stroke-width="1.3"/><g fill="#26344b"><circle cx="12.1" cy="1.5" r="1.5"/><circle cx="2.1" cy="11.6" r="1.5"/><circle cx="8" cy="5.7" r="1.2"/><circle cx="5.2" cy="8.6" r="1.2"/></g></svg>
<svg style="left:1548.5px;top:372px" width="14" height="14" viewBox="0 0 14 14"><circle cx="7" cy="7" r="7" fill="#26344b"/><path d="M2.5 7.5 A4.5 4.5 0 0 1 11.5 7.5" stroke="#f5f5f5" stroke-width="1.3" fill="none"/><path d="M6.3 4 L7.7 4 L7.7 9.5 L6.3 9.5Z" fill="#f5f5f5"/><circle cx="7" cy="10.5" r="1.6" fill="#f5f5f5"/></svg>
<svg style="left:1773px;top:49.5px" width="8" height="5" viewBox="0 0 9 7"><path d="M0 0 L4 3.5 L0 7Z M4.5 0 L8.5 3.5 L4.5 7Z" fill="#c5cad3"/></svg>
<div class="a" style="left:1765px;top:59px;width:26px;height:55px;background:#522f48"></div>
<div class="t" style="left:1772.5px;top:66.5px;font-size:12.5px;color:#e9eaee;writing-mode:vertical-rl;letter-spacing:-0.3px">Objects</div>
<div class="t" style="left:1772px;top:121px;font-size:12px;color:#7a8291;writing-mode:vertical-rl;letter-spacing:-0.1px">Validations</div>
<div class="a" style="left:80px;top:845px;width:1238px;height:1px;background:#e3e4e8"></div>
<div class="a" style="left:496px;top:240px;width:800px;height:599px;background:#2d3d55;border:1px solid #1d2c46"></div>
<div class="a" style="left:499px;top:267px;width:794px;height:569px;background:#fff"></div>
<div class="a" style="left:501px;top:268px;width:792px;height:73px;background:#f7f7f7"></div>
<div class="a" style="left:499px;top:341px;width:794px;height:1px;background:#d9d9d9"></div>
<div class="a" style="left:1233px;top:257px;width:12px;height:2px;background:#fff"></div>
<svg style="left:1255px;top:248px" width="12" height="12" viewBox="0 0 12 12"><rect x="0.7" y="1.3" width="10.6" height="10" fill="none" stroke="#fff" stroke-width="1.4"/><rect x="0" y="0" width="12" height="3" fill="#fff"/></svg>
<svg style="left:1277.5px;top:249px" width="11" height="11" viewBox="0 0 11 11"><path d="M0.8 0.8 L10.2 10.2 M10.2 0.8 L0.8 10.2" stroke="#fff" stroke-width="1.7"/></svg>
<svg style="left:521px;top:288.8px" width="28" height="28" viewBox="0 0 28 28"><circle cx="14" cy="14" r="14" fill="#4fb01c"/><path d="M10.2 4.4 L12.1 4.4 L11.5 12.2 L7.8 12.2Z M15.9 4.4 L17.8 4.4 L20.6 12.2 L16.9 12.2Z M4.2 14.3 L23.8 14.3 L23 16.7 L5 16.7Z M6 16.5 L10.3 16.5 L10.3 22 L6.3 22Z M17.7 16.5 L22 16.5 L21.7 22 L17.7 22Z" fill="#fff"/></svg>
<svg style="left:1202px;top:295px" width="13" height="8" viewBox="0 0 13 8"><path d="M1 7 L6.5 1.5 L12 7" stroke="#2d3d55" stroke-width="1.9" fill="none"/></svg>
<svg style="left:1231.5px;top:295px" width="13" height="8" viewBox="0 0 13 8"><path d="M1 1 L6.5 6.5 L12 1" stroke="#2d3d55" stroke-width="1.9" fill="none"/></svg>
<svg style="left:1261.5px;top:291px" width="13" height="15" viewBox="0 0 13 15"><path d="M0 1 L0 10 L3 10 L3 3 L8 3 L8 0 L1 0Z" fill="#2d3d55"/><path d="M4.5 4.5 L9.5 4.5 L13 8 L13 15 L4.5 15Z" fill="#2d3d55"/></svg>
<div class="a" style="left:569px;top:373px;width:724px;height:1px;background:#dfe5ec"></div>
<div class="a" style="left:499px;top:348px;width:70.5px;height:26px;border:1px solid #dfe5ec;border-left:0;border-bottom:0;background:#fff"></div>
<div class="a" style="left:669px;top:353px;width:1px;height:15px;background:#dfe5ec"></div>
<div class="t" style="left:502.60px;top:249.00px;font-size:12px;color:#e9edf2;letter-spacing:-0.213px;">Log Details</div>
<div class="t" style="left:567.80px;top:286.00px;font-size:18.5px;color:#2d3d55;letter-spacing:-0.260px;">Accept</div>
<div class="t" style="left:567.80px;top:314.00px;font-size:11.7px;color:#333;letter-spacing:-0.034px;">echo-request Traffic Accepted from 10.21.16.4 to 10.22.16.4</div>
<div class="t" style="left:511.70px;top:357.00px;font-size:11.5px;color:#333;font-weight:700;letter-spacing:-0.488px;">Details</div>
<div class="t" style="left:581.50px;top:355.00px;font-size:11.7px;color:#333;letter-spacing:-0.228px;">Matched Rules</div>
<div class="t" style="left:529.70px;top:389.00px;font-size:14.5px;color:#3b80d2;letter-spacing:-0.365px;">Log Info</div>
<div class="a" style="left:586px;top:395px;width:266px;height:2px;background:repeating-linear-gradient(to right,#d6d6d6 0 1px,transparent 1px 4px)"></div>
<svg style="left:869px;top:393.5px" width="12" height="7" viewBox="0 0 12 7"><path d="M0.7 6.3 L6 1 L11.3 6.3" stroke="#a3a7ad" stroke-width="1.2" fill="none"/></svg>
<div class="t" style="left:528.60px;top:414.00px;font-size:11.7px;color:#333;letter-spacing:0.152px;">Origin</div>
<div class="t" style="left:688.60px;top:415.00px;font-size:11.4px;color:#222;font-weight:700;letter-spacing:-0.296px;">CP-FW-Azure-FireNet4</div>
<div class="t" style="left:528.60px;top:439.00px;font-size:11.7px;color:#333;letter-spacing:-0.987px;">Time</div>
<div class="t" style="left:688.60px;top:440.00px;font-size:11.4px;color:#222;font-weight:700;letter-spacing:-0.368px;">Today, 10:26:34 PM</div>
<div class="t" style="left:528.60px;top:464.00px;font-size:11.7px;color:#333;letter-spacing:-0.441px;">Blade</div>
<div class="t" style="left:688.60px;top:465.00px;font-size:11.4px;color:#222;font-weight:700;letter-spacing:-0.465px;">Firewall</div>
<div class="t" style="left:528.60px;top:489.00px;font-size:11.7px;color:#333;letter-spacing:-0.268px;">Product Family</div>
<div class="t" style="left:688.60px;top:490.00px;font-size:11.4px;color:#222;font-weight:700;letter-spacing:-1.151px;">Access</div>
<div class="t" style="left:528.60px;top:514.00px;font-size:11.7px;color:#333;letter-spacing:-1.211px;">Type</div>
<div class="t" style="left:688.60px;top:515.00px;font-size:11.4px;color:#222;font-weight:700;letter-spacing:-0.396px;">Connection</div>
<svg style="left:671px;top:418.5px" width="16" height="9" viewBox="0 0 16 9"><path d="M0 9 L0 4 Q0 1 3 1 L13 1 Q16 1 16 4 L16 9Z" fill="#2458a0"/><rect x="2.8" y="3.8" width="10.4" height="3" fill="#fff"/><rect x="3.8" y="4.6" width="3.5" height="1.4" fill="#2458a0"/><path d="M9.5 6.3 L10.3 4.5 M11 6.3 L11.8 4.5" stroke="#2458a0" stroke-width="0.8"/></svg>
<svg style="left:671.5px;top:441.5px" width="13" height="13" viewBox="0 0 13 13"><circle cx="6.5" cy="6.5" r="5.8" fill="none" stroke="#2458a0" stroke-width="1.1"/><path d="M4 5.8 L6.5 8 L9 5.8" fill="none" stroke="#2458a0" stroke-width="1.1"/></svg>
<svg style="left:670px;top:463.7px" width="16" height="16" viewBox="0 0 16 16"><g fill="#2458a0"><rect x="0.2" y="0" width="4.6" height="4.2" rx="1"/><rect x="5.9" y="0" width="4.2" height="4.2" rx="1"/><rect x="11.2" y="0" width="4.6" height="4.2" rx="1"/><rect x="0.2" y="5.7" width="2.6" height="4.2" rx="1"/><rect x="3.9" y="5.7" width="8.2" height="4.2" rx="1"/><rect x="13.2" y="5.7" width="2.6" height="4.2" rx="1"/><rect x="0.2" y="11.4" width="4.6" height="4.2" rx="1"/><rect x="5.9" y="11.4" width="4.2" height="4.2" rx="1"/><rect x="11.2" y="11.4" width="4.6" height="4.2" rx="1"/></g></svg>
<svg style="left:671px;top:490.5px" width="14" height="14" viewBox="0 0 14 14"><circle cx="7.9" cy="8.4" r="4.1" fill="none" stroke="#2458a0" stroke-width="3.4"/><circle cx="2.3" cy="2.3" r="2.3" fill="#2458a0"/></svg>
<svg style="left:671px;top:516px" width="15" height="14" viewBox="0 0 15 14"><path d="M2 2 L12.5 11.5" stroke="#2458a0" stroke-width="1.2"/><circle cx="2" cy="2" r="2" fill="#2458a0"/><circle cx="12.5" cy="11.5" r="2.4" fill="#2458a0"/></svg>
<div class="t" style="left:529.70px;top:563.00px;font-size:14.5px;color:#3b80d2;letter-spacing:-0.641px;">Traffic</div>
<div class="a" style="left:570px;top:569px;width:282px;height:2px;background:repeating-linear-gradient(to right,#d6d6d6 0 1px,transparent 1px 4px)"></div>
<svg style="left:869px;top:567.5px" width="12" height="7" viewBox="0 0 12 7"><path d="M0.7 6.3 L6 1 L11.3 6.3" stroke="#a3a7ad" stroke-width="1.2" fill="none"/></svg>
<div class="t" style="left:528.60px;top:583.00px;font-size:11.7px;color:#333;letter-spacing:-0.491px;">Source</div>
<div class="t" style="left:689.50px;top:584.00px;font-size:11.4px;color:#222;font-weight:700;letter-spacing:-0.344px;">10.21.16.4</div>
<div class="t" style="left:528.60px;top:608.00px;font-size:11.7px;color:#333;letter-spacing:-0.698px;">Service</div>
<div class="t" style="left:672.30px;top:609.00px;font-size:11.4px;color:#222;font-weight:700;letter-spacing:-0.235px;">echo-request (ICMP)</div>
<div class="t" style="left:528.60px;top:633.00px;font-size:11.7px;color:#333;letter-spacing:-0.143px;">Interface</div>
<div class="t" style="left:688.30px;top:634.00px;font-size:11.4px;color:#222;font-weight:700;letter-spacing:-0.330px;">eth1</div>
<div class="t" style="left:528.60px;top:659.00px;font-size:11.7px;color:#333;letter-spacing:0.065px;">Destination</div>
<div class="t" style="left:689.50px;top:660.00px;font-size:11.4px;color:#222;font-weight:700;letter-spacing:-0.344px;">10.22.16.4</div>
<svg style="left:671px;top:583.5px" width="14" height="14" viewBox="0 0 14 14"><circle cx="7" cy="7" r="6.7" fill="#2458a0"/><path d="M3.5 2.8 Q5.5 1.5 7.5 2.3 L8 3.8 L6.5 5 L7.2 6.5 L5.5 7.5 L4 6 L3 4.5Z" fill="#fff"/><path d="M7.5 7.5 L10.5 8 L11 10 L9 12.5 L8 12 L8.2 10Z" fill="#fff"/><path d="M10 2.5 L11.5 4 L10.5 4.5Z" fill="#fff"/></svg>
<svg style="left:673px;top:635.5px" width="11" height="13" viewBox="0 0 11 13"><rect x="3.9" y="0" width="3.2" height="6" fill="#2458a0"/><path d="M0.8 5.2 L10.2 5.2 L5.5 10Z" fill="#2458a0"/><rect x="0" y="11.3" width="11" height="1.4" fill="#2458a0"/></svg>
<svg style="left:671px;top:659.5px" width="14" height="14" viewBox="0 0 14 14"><circle cx="7" cy="7" r="6.7" fill="#2458a0"/><path d="M3.5 2.8 Q5.5 1.5 7.5 2.3 L8 3.8 L6.5 5 L7.2 6.5 L5.5 7.5 L4 6 L3 4.5Z" fill="#fff"/><path d="M7.5 7.5 L10.5 8 L11 10 L9 12.5 L8 12 L8.2 10Z" fill="#fff"/><path d="M10 2.5 L11.5 4 L10.5 4.5Z" fill="#fff"/></svg>
<div class="t" style="left:924.10px;top:389.00px;font-size:14.5px;color:#3b80d2;letter-spacing:-0.881px;">Policy</div>
<div class="a" style="left:963.5px;top:395px;width:282.5px;height:2px;background:repeating-linear-gradient(to right,#d6d6d6 0 1px,transparent 1px 4px)"></div>
<svg style="left:1262.5px;top:393.5px" width="12" height="7" viewBox="0 0 12 7"><path d="M0.7 6.3 L6 1 L11.3 6.3" stroke="#a3a7ad" stroke-width="1.2" fill="none"/></svg>
<div class="t" style="left:922.40px;top:414.00px;font-size:11.7px;color:#333;letter-spacing:-0.064px;">Action</div>
<div class="t" style="left:1082.30px;top:415.00px;font-size:11.4px;color:#222;font-weight:700;letter-spacing:-0.581px;">Accept</div>
<div class="t" style="left:922.40px;top:439.00px;font-size:11.7px;color:#333;letter-spacing:-0.227px;">Policy Management</div>
<div class="t" style="left:1066.30px;top:440.00px;font-size:11.4px;color:#222;font-weight:700;letter-spacing:-0.398px;">securitymanager</div>
<div class="t" style="left:922.40px;top:464.00px;font-size:11.7px;color:#333;letter-spacing:-0.501px;">Policy Name</div>
<div class="t" style="left:1066.30px;top:465.00px;font-size:11.4px;color:#222;font-weight:700;letter-spacing:-0.409px;">Standard</div>
<div class="t" style="left:922.40px;top:489.00px;font-size:11.7px;color:#333;letter-spacing:-0.348px;">Policy Date</div>
<div class="t" style="left:1066.30px;top:490.00px;font-size:11.4px;color:#222;font-weight:700;letter-spacing:-0.346px;">Today, 10:15:48 PM</div>
<div class="t" style="left:922.40px;top:514.00px;font-size:11.7px;color:#333;letter-spacing:-0.697px;">Layer Name</div>
<div class="t" style="left:1066.30px;top:515.00px;font-size:11.4px;color:#222;font-weight:700;letter-spacing:-0.065px;">Network</div>
<div class="t" style="left:922.40px;top:539.00px;font-size:11.7px;color:#333;letter-spacing:-0.599px;">Access Rule Name</div>
<div class="t" style="left:922.40px;top:564.00px;font-size:11.7px;color:#333;letter-spacing:-0.421px;">Access Rule Number</div>
<div class="t" style="left:1067.30px;top:543.00px;font-size:12.5px;color:#3a86e0;letter-spacing:-0.050px;">Allow-all</div>
<div class="t" style="left:1067.90px;top:567.00px;font-size:12px;color:#3a86e0;">1</div>
<svg style="left:1065px;top:416.5px" width="13.6" height="13.6" viewBox="0 0 28 28"><circle cx="14" cy="14" r="14" fill="#4fb01c"/><path d="M10.2 4.4 L12.1 4.4 L11.5 12.2 L7.8 12.2Z M15.9 4.4 L17.8 4.4 L20.6 12.2 L16.9 12.2Z M4.2 14.3 L23.8 14.3 L23 16.7 L5 16.7Z M6 16.5 L10.3 16.5 L10.3 22 L6.3 22Z M17.7 16.5 L22 16.5 L21.7 22 L17.7 22Z" fill="#fff"/></svg>
<div class="t" style="left:922.80px;top:614.00px;font-size:14.5px;color:#3b80d2;letter-spacing:-0.409px;">Actions</div>
<div class="a" style="left:976px;top:619px;width:270px;height:2px;background:repeating-linear-gradient(to right,#d6d6d6 0 1px,transparent 1px 4px)"></div>
<svg style="left:1262.5px;top:617px" width="12" height="7" viewBox="0 0 12 7"><path d="M0.7 6.3 L6 1 L11.3 6.3" stroke="#a3a7ad" stroke-width="1.2" fill="none"/></svg>
<div class="t" style="left:922.80px;top:639.00px;font-size:11.2px;color:#333;font-weight:700;letter-spacing:-0.387px;">Report Log</div>
<div class="t" style="left:1067.00px;top:642.00px;font-size:12px;color:#3a86e0;letter-spacing:-0.070px;">Report Log to Check Point</div>
<div class="t" style="left:922.80px;top:687.00px;font-size:14.5px;color:#3b80d2;letter-spacing:0.063px;">More</div>
<div class="a" style="left:963.5px;top:693px;width:282.5px;height:2px;background:repeating-linear-gradient(to right,#d6d6d6 0 1px,transparent 1px 4px)"></div>
<svg style="left:1262.5px;top:691px" width="12" height="7" viewBox="0 0 12 7"><path d="M0.7 0.7 L6 6 L11.3 0.7" stroke="#a3a7ad" stroke-width="1.2" fill="none"/></svg>
<svg style="left:1280px;top:825px" width="10" height="10" viewBox="0 0 10 10"><g fill="#c5ccd6"><rect x="8" y="0" width="1.2" height="1.2"/><rect x="6" y="2" width="1.2" height="1.2"/><rect x="8" y="2" width="1.2" height="1.2"/><rect x="4" y="4" width="1.2" height="1.2"/><rect x="6" y="4" width="1.2" height="1.2"/><rect x="8" y="4" width="1.2" height="1.2"/><rect x="2" y="6" width="1.2" height="1.2"/><rect x="4" y="6" width="1.2" height="1.2"/><rect x="6" y="6" width="1.2" height="1.2"/><rect x="8" y="6" width="1.2" height="1.2"/><rect x="0" y="8" width="1.2" height="1.2"/><rect x="2" y="8" width="1.2" height="1.2"/><rect x="4" y="8" width="1.2" height="1.2"/><rect x="6" y="8" width="1.2" height="1.2"/><rect x="8" y="8" width="1.2" height="1.2"/></g></svg>
<svg style="left:1195px;top:590px" width="13" height="20" viewBox="0 0 13 20"><path d="M0.5 0.5 L0.5 16 L4 12.5 L6.5 18.5 L9 17.5 L6.5 11.5 L11.5 11.5Z" fill="#fff" stroke="#000" stroke-width="1"/></svg>
</body></html>
